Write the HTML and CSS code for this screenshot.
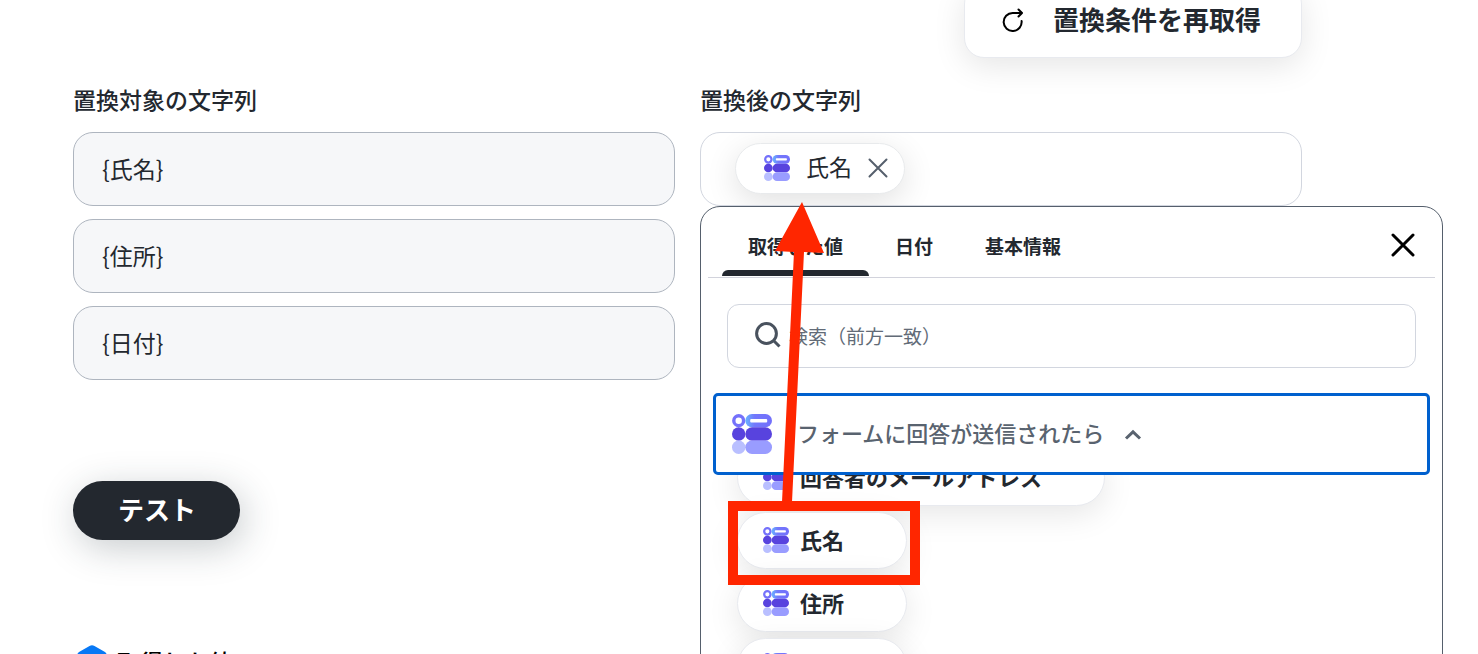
FILE: index.html
```html
<!DOCTYPE html>
<html lang="ja">
<head>
<meta charset="utf-8">
<title>文字列の置換</title>
<link rel="stylesheet" href="styles.css">
</head>
<body>
<svg class="defs" width="0" height="0" aria-hidden="true">
  <defs>
    <linearGradient id="pill-top" x1="0" x2="1" y1="0" y2="0">
      <stop offset="0" stop-color="#66b4ff"/>
      <stop offset="0.35" stop-color="#7378fc"/>
      <stop offset="1" stop-color="#7370fb"/>
    </linearGradient>
    <symbol id="form-icon" viewBox="0 0 40 40">
      <circle cx="6.7" cy="6.7" r="4.9" fill="#fff" stroke="#7471fb" stroke-width="3.4"/>
      <rect x="13.3" y="0" width="26.7" height="13.3" rx="6.65" fill="url(#pill-top)"/>
      <rect x="18.2" y="5" width="17" height="3.4" rx="1" fill="#fff"/>
      <circle cx="6.7" cy="20" r="6.7" fill="#5843de"/>
      <rect x="13.3" y="13.3" width="26.7" height="13.4" rx="6.7" fill="#5843de"/>
      <circle cx="6.7" cy="33.3" r="6.7" fill="#b9bfff"/>
      <rect x="13.3" y="26.6" width="26.7" height="13.4" rx="6.7" fill="#999cff"/>
    </symbol>
  </defs>
</svg>
<main class="page">
  <div class="toolbar">
    <button class="refresh" type="button">
      <svg class="refresh-icon" viewBox="0 0 24 24" aria-hidden="true"><path d="M20.6 13A9 9 0 1 1 11.6 5H20.5M17.5 1.500L21 5L17.5 8.500"/></svg>
      置換条件を再取得
    </button>
  </div>

  <div class="columns">
    <section class="column">
      <h2 class="label">置換対象の文字列</h2>
      <div class="fields">
        <input class="field" type="text" value="{氏名}" aria-label="置換対象 1" readonly>
        <input class="field" type="text" value="{住所}" aria-label="置換対象 2" readonly>
        <input class="field" type="text" value="{日付}" aria-label="置換対象 3" readonly>
      </div>
      <button class="test" type="button">テスト</button>
      <h3 class="result">
        <svg class="result-icon" viewBox="0 0 30 32" aria-hidden="true"><path d="M12.5 1Q15 -.5 17.5 1L28 7Q30 8.500 30 11V21Q30 24 28 25L17.5 31Q15 32.500 12.5 31L2 25Q0 24 0 21V11Q0 8.500 2 7Z" fill="#0878f5"/></svg>
        取得した値
      </h3>
    </section>

    <section class="column">
      <h2 class="label" id="after-label">置換後の文字列</h2>
      <div class="picker">
        <div class="token-field">
          <span class="token">
            <svg class="icon-small" aria-hidden="true"><use href="#form-icon"/></svg>
            <span class="token-text">氏名</span>
            <button class="plain" type="button" aria-label="氏名を削除">
              <svg class="remove-icon" viewBox="0 0 20 20" aria-hidden="true"><path d="M1.500 1.500L18.500 18.500M18.500 1.500L1.500 18.500"/></svg>
            </button>
          </span>
          <input class="token-input" type="text" aria-labelledby="after-label">
        </div>

        <div class="popover">
          <div class="tabs">
            <button class="tab active" type="button">取得した値</button>
            <button class="tab" type="button">日付</button>
            <button class="tab" type="button">基本情報</button>
            <button class="plain close" type="button" aria-label="閉じる">
              <svg class="close-icon" viewBox="0 0 24 24" aria-hidden="true"><path d="M2 2L22 22M22 2L2 22"/></svg>
            </button>
          </div>
          <label class="search">
            <svg class="search-icon" viewBox="0 0 26 26" aria-hidden="true"><circle cx="11.5" cy="11.5" r="9.9"/><path d="M18.500 18.500L24.500 24.500"/></svg>
            <input class="search-input" type="text" placeholder="検索（前方一致）" aria-label="検索">
          </label>
          <button class="group" type="button" aria-expanded="true">
            <svg class="icon-large" aria-hidden="true"><use href="#form-icon"/></svg>
            <span class="group-text">フォームに回答が送信されたら</span>
            <svg class="chevron" viewBox="0 0 18 12" aria-hidden="true"><path d="M2 9.500L9 2.800L16 9.500"/></svg>
          </button>
          <div class="options">
            <button class="option" type="button"><svg class="icon-small" aria-hidden="true"><use href="#form-icon"/></svg>回答者のメールアドレス</button>
            <button class="option" type="button"><svg class="icon-small" aria-hidden="true"><use href="#form-icon"/></svg>氏名</button>
            <button class="option" type="button"><svg class="icon-small" aria-hidden="true"><use href="#form-icon"/></svg>住所</button>
            <button class="option" type="button"><svg class="icon-small" aria-hidden="true"><use href="#form-icon"/></svg>日付</button>
          </div>
        </div>

        <svg class="annotation" viewBox="0 0 200 390" aria-hidden="true">
          <rect x="9" y="304" width="182" height="74" fill="none" stroke="#ff2600" stroke-width="10"/>
          <path d="M78 0L100 51L80 50L68 300H58L70 50L51 49Z" fill="#ff2600"/>
        </svg>
      </div>
    </section>
  </div>
</main>
</body>
</html>
```
FILE: styles.css
```css
* { box-sizing: border-box; }

body {
  margin: 0;
  background: #fff;
  color: #23282f;
  font-family: "Noto Sans CJK JP", sans-serif;
}

button, input { font: inherit; color: inherit; }
button { cursor: pointer; }
h2, h3 { margin: 0; }
.defs { position: absolute; }

.page {
  height: 100vh;
  overflow: hidden;
  padding: 0 176px 0 73px;
}

.toolbar {
  display: flex;
  justify-content: flex-end;
  margin-top: -16px;
}

.refresh {
  display: flex;
  align-items: center;
  gap: 28px;
  height: 74px;
  padding: 0 40px 6px 36px;
  border: 1px solid #e8eaef;
  border-radius: 20px;
  background: #fff;
  box-shadow: 0 8px 32px rgba(0, 0, 0, 0.1);
  font-size: 26px;
  font-weight: 700;
}

.refresh-icon {
  width: 24px;
  height: 24px;
  margin-top: 4px;
  fill: none;
  stroke: #000;
  stroke-width: 2;
  stroke-linecap: round;
  stroke-linejoin: round;
}

.columns {
  display: grid;
  grid-template-columns: 1fr 1fr;
  gap: 25px;
  padding-top: 25px;
}

.label {
  margin-bottom: 17px;
  font-size: 23px;
  line-height: 32px;
  font-weight: 500;
}

.fields {
  display: grid;
  gap: 13px;
}

.field {
  width: 100%;
  height: 74px;
  padding: 0 28px 2px;
  border: 1px solid #aeb5bf;
  border-radius: 20px;
  background: #f6f7f9;
  font-size: 23px;
}

.test {
  display: block;
  height: 59px;
  margin: 101px 0 100px;
  padding: 0 44px 4px 45px;
  border: 0;
  border-radius: 30px;
  background: #23282f;
  box-shadow: 4px 8px 36px rgba(35, 50, 60, 0.25);
  color: #fff;
  font-size: 26px;
  font-weight: 700;
}

.result {
  display: flex;
  align-items: center;
  gap: 10px;
  padding: 4px;
  color: #000;
  font-size: 23px;
  font-weight: 500;
}

.result-icon { width: 30px; height: 32px; }

.picker { position: relative; }

.token-field {
  display: flex;
  align-items: center;
  height: 74px;
  padding: 0 28px 2px 34px;
  border: 1px solid #d2d6df;
  border-radius: 20px;
  overflow: hidden;
}

.token {
  display: flex;
  align-items: center;
  gap: 16px;
  height: 51px;
  padding: 0 16px 0 28px;
  border: 1px solid #e8eaec;
  border-radius: 26px;
  background: #fff;
  box-shadow: 0 8px 32px rgba(0, 0, 0, 0.12);
  font-size: 23px;
}

.token-text { padding-bottom: 4px; }

.plain {
  display: flex;
  padding: 0;
  border: 0;
  background: none;
}

.token-input {
  flex: 1;
  min-width: 0;
  border: 0;
  background: none;
  font-size: 23px;
}

.icon-small { flex: none; width: 26px; height: 26px; }
.icon-large { flex: none; width: 40px; height: 40px; }

.remove-icon {
  width: 20px;
  height: 20px;
  stroke: #555f6c;
  stroke-width: 2;
  stroke-linecap: round;
}

.popover {
  position: absolute;
  top: 74px;
  left: 0;
  right: -141px;
  height: 600px;
  overflow: hidden;
  border: 1px solid #555f6c;
  border-radius: 20px;
  background: #fff;
}

.tabs {
  display: flex;
  margin: 0 7px;
  padding: 10px 20px 0 14px;
  border-bottom: 1px solid #d2d3dc;
}

.tab {
  position: relative;
  height: 60px;
  padding: 0 26px 4px;
  border: 0;
  background: none;
  font-size: 19px;
  font-weight: 700;
}

.active::after {
  content: "";
  position: absolute;
  left: 0;
  right: 0;
  bottom: 1px;
  height: 6px;
  border-radius: 6px 6px 0 0;
  background: #23282f;
}

.close {
  align-self: center;
  margin-left: auto;
  padding-bottom: 4px;
}

.close-icon {
  width: 24px;
  height: 24px;
  stroke: #000;
  stroke-width: 3;
  stroke-linecap: round;
}

.search {
  display: flex;
  align-items: center;
  gap: 8px;
  height: 64px;
  margin: 26px 26px 25px;
  padding: 0 28px 2px 27px;
  border: 1px solid #d2d6df;
  border-radius: 12px;
}

.search-icon {
  flex: none;
  width: 26px;
  height: 26px;
  fill: none;
  stroke: #49525e;
  stroke-width: 3;
}

.search-input {
  flex: 1;
  min-width: 0;
  padding: 0;
  border: 0;
  outline: 0;
  background: none;
  font-size: 19px;
}

.search-input::placeholder { color: #626b77; }

.group {
  position: relative;
  z-index: 1;
  display: flex;
  align-items: center;
  width: calc(100% - 24px);
  height: 82px;
  margin: 0 12px;
  padding: 0 16px;
  border: 3px solid #0060ce;
  border-radius: 5px;
  background: #fff;
  color: #59636f;
  font-size: 22px;
  font-weight: 500;
}

.group-text { padding: 0 20px 4px 25px; }

.chevron {
  width: 18px;
  height: 12px;
  margin-top: 2px;
  fill: none;
  stroke: #59636f;
  stroke-width: 3;
}

.options {
  display: flex;
  flex-direction: column;
  align-items: flex-start;
  gap: 6px;
  margin-top: -26px;
  padding: 0 36px;
}

.option {
  display: flex;
  align-items: center;
  gap: 11px;
  height: 57px;
  padding: 0 62px 4px 25px;
  border: 1px solid #e8eaef;
  border-radius: 29px;
  background: #fff;
  box-shadow: 0 8px 32px rgba(0, 0, 0, 0.1);
  font-size: 22px;
  font-weight: 700;
}

.option .icon-small { margin-top: 3px; }

.annotation {
  position: absolute;
  z-index: 2;
  top: 70px;
  left: 24px;
  width: 200px;
  height: 390px;
}
```
